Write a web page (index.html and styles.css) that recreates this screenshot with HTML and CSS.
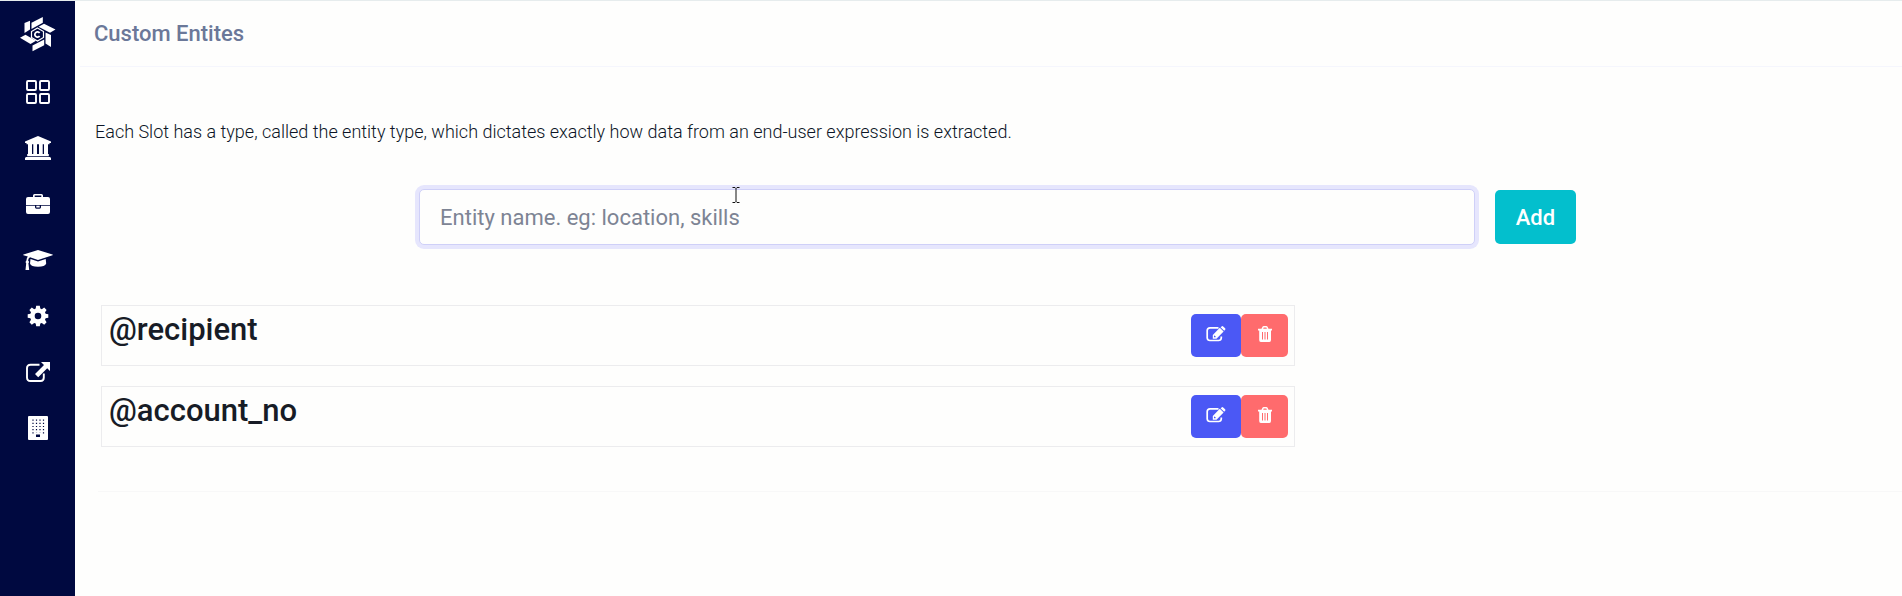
FILE: index.html
```html
<!DOCTYPE html>
<html lang="en">
<head>
<meta charset="utf-8">
<title>Custom Entites</title>
<link rel="stylesheet" href="styles.css">
</head>
<body>
<svg class="symbols" aria-hidden="true">
  <symbol id="edit" viewBox="0 0 20 16"><path d="M12.500 1.800H4A2.800 2.800 0 0 0 1.200 4.500v7.500A2.800 2.800 0 0 0 4 14.500h8.500a2.800 2.800 0 0 0 2.800-2.500v-1.500" fill="none" stroke="currentColor" stroke-width="1.700"/><path fill="currentColor" fill-rule="evenodd" d="M13.800 1.800 17.600 5.600 10.500 12.700H6.800V8.900zM14.600 1.200 15.600.4q.8-.7 1.600 0l1.900 1.800q.7.800 0 1.600l-.9 1zM8 9.800v1.500h1.400l.5-.5-1.500-1.400z"/></symbol>
  <symbol id="trash" viewBox="0 0 14 16"><path fill="currentColor" fill-rule="evenodd" d="M0 2.800H3.500L4.300 1.100Q4.800 0 5.900 0h2.300q1.100 0 1.500 1.100l.8 1.700H14v1.700h-1V14q0 2-1.600 2H2.800q-1.600 0-1.600-2V4.500H0zM5.200 2.800h3.700l-.6-1.300H5.700zM4 6v7.500h1V6zm2.500 0v7.500h1V6zM9 6v7.500h1V6z"/></symbol>
</svg>
<div class="app">
  <nav class="sidebar" aria-label="Main">
    <a class="logo" href="#" aria-label="Home"><svg width="36" height="36" viewBox="0 0 36 36"><g fill="#fff"><path d="M4.500 6 10 3.800V12.500L4.500 16z"/><path d="M11.500 5.800 22.800 0v5.800L11.500 12z"/><path d="M18.500 9.800 24 6.800 35.500 12.500 30 15.800z"/><path d="M25.500 15.500 31 18V30L25.500 26.500z"/><path d="M12.500 28.500 24.200 22.500V28.300l-11.700 6z"/><path d="M0 20.800 5.500 17.800 16 23.800 10.500 27z"/></g><path d="M17.500 11 23.500 14.500v6L17.500 24l-6-3.500v-6z" fill="#000940" stroke="#fff" stroke-width="1.200"/><path d="M19.600 16A2.600 2.600 0 1 0 19.600 19" fill="none" stroke="#fff" stroke-width="1.800"/></svg></a>
    <a href="#" aria-label="Dashboard"><svg width="24" height="24" viewBox="0 0 24 24"><g fill="none" stroke="#fff" stroke-width="1.900"><rect x="1" y="1" width="9" height="9" rx="1"/><rect x="14" y="1" width="9" height="9" rx="1"/><rect x="1" y="14" width="9" height="9" rx="1"/><rect x="14" y="14" width="9" height="9" rx="1"/></g></svg></a>
    <a href="#" aria-label="Institution"><svg width="26" height="24" viewBox="0 0 26 24"><path fill="#fff" d="M13 0 26 5.500V7h-1.500v1.200h-23V7H0V5.500zM3 8.200H7V18h1.300V8.200H12V18h2V8.200h3.700V18H19V8.200h4V18h.8v2.200H2.200V18H3zM0 24v-2l1-1h24l1 1v2z"/></svg></a>
    <a href="#" aria-label="Workspace"><svg width="24" height="20" viewBox="0 0 24 20"><path fill="#fff" fill-rule="evenodd" d="M7 3V1.500Q7 0 8.500 0h7Q17 0 17 1.500V3h5q2 0 2 2v6H0V5q0-2 2-2zM8.700 3h6.600V1.600H8.700zM0 11.700h9v1.600q0 1.400 1.400 1.400h3.200q1.400 0 1.400-1.400v-1.600h9V18q0 2-2 2H2q-2 0-2-2zM10.300 11.700h3.400v1.700h-3.400z"/></svg></a>
    <a href="#" aria-label="Training"><svg width="30" height="20" viewBox="0 0 30 20"><path fill="#fff" d="M15 0 29.500 4.500q.8.300 0 .8L15 10 7 7.300q-1.700 1-1.900 3.200 1.600 1.200.3 2.700L6.200 20H2.500l.7-6.800q-1.200-1.500.2-2.700.2-2.400 1.400-3.900L.5 5.300q-.8-.5 0-.8zM7.500 9l7.500 2.500L22.700 9l.5 4.500q-1.200 3.300-8.200 3.300T7 13.500z"/></svg></a>
    <a href="#" aria-label="Settings"><svg width="22" height="22" viewBox="0 0 22 22"><path fill="#fff" fill-rule="evenodd" d="M9.200.8h3.600l.5 2.800 1.500.6L17.200 2.500 19.600 5 18 7.300l.6 1.500 2.700.4v3.600l-2.700.5-.6 1.500 1.600 2.400-2.400 2.500-2.400-1.700-1.500.6-.5 2.700H9.200l-.5-2.700-1.500-.6-2.400 1.700-2.400-2.500L4 14.800l-.6-1.500-2.700-.5V9.200l2.700-.4L4 7.300 2.400 5l2.400-2.500 2.400 1.700 1.500-.6zM11 7.700a3.300 3.300 0 1 0 0 6.600 3.300 3.300 0 0 0 0-6.600z"/></svg></a>
    <a href="#" aria-label="Open site"><svg width="24" height="20" viewBox="0 0 24 20"><path d="M13.500 2.800H4.500Q1 2.800 1 6v9.500Q1 19 4.500 19h10q3.300 0 3.300-3.500V11.500" fill="none" stroke="#fff" stroke-width="1.900"/><path fill="#fff" d="M15 0H24v9L21.200 6.200l-9 9L9 12l9-9z"/></svg></a>
    <a href="#" aria-label="Company"><svg width="20" height="24" viewBox="0 0 20 24"><path fill="#fff" d="M1 0h18q1 0 1 1v22q0 1-1 1H1q-1 0-1-1V1q0-1 1-1z"/><path d="M5 3.500v15M8.500 3.500v13M12 3.500v13M15.500 3.500v15" stroke="#000940" stroke-width="1.200" stroke-dasharray="1.200 2"/><path d="M8 18.500h4V21H8z" fill="#000940"/></svg></a>
  </nav>
  <div class="page">
    <header class="topbar"><h1>Custom Entites</h1></header>
    <main>
      <p class="intro">Each Slot has a type, called the entity type, which dictates exactly how data from an end-user expression is extracted.</p>
      <form class="add-form">
        <div class="field">
          <input type="text" aria-label="Entity name" placeholder="Entity name. eg: location, skills">
          <svg class="pointer" width="8" height="16" viewBox="0 0 8 16" aria-hidden="true"><path d="M.500.500H3L4 1.500 5 .500H7.500M4 1.500v13M.500 15.500H3L4 14.500 5 15.500H7.500" fill="none" stroke="#111"/></svg>
        </div>
        <button type="button" class="add">Add</button>
      </form>
      <ul class="entities">
        <li><h2>@recipient</h2><div class="actions"><button type="button" class="edit" aria-label="Edit recipient"><svg width="20" height="16"><use href="#edit"/></svg></button><button type="button" class="delete" aria-label="Delete recipient"><svg width="14" height="16"><use href="#trash"/></svg></button></div></li>
        <li><h2>@account_no</h2><div class="actions"><button type="button" class="edit" aria-label="Edit account_no"><svg width="20" height="16"><use href="#edit"/></svg></button><button type="button" class="delete" aria-label="Delete account_no"><svg width="14" height="16"><use href="#trash"/></svg></button></div></li>
      </ul>
    </main>
  </div>
</div>
</body>
</html>
```
FILE: styles.css
```css
* { box-sizing: border-box; }
body { margin: 0; background: #fefefd; color: #1b2430; font-family: Roboto, sans-serif; }
h1, h2, p, ul { margin: 0; padding: 0; font-weight: 500; }
button, input { font: inherit; }
.symbols { position: absolute; width: 0; height: 0; }
.app { display: flex; min-height: 100vh; border-top: 1px solid #e6eced; }
.sidebar { width: 75px; flex-shrink: 0; background: #000940; display: flex; flex-direction: column; align-items: center; padding-top: 5px; }
.sidebar a { display: flex; align-items: center; justify-content: center; width: 100%; height: 56px; }
.sidebar .logo { height: 58px; }
.page { flex: 1; min-width: 0; padding-left: 5px; }
.topbar { height: 66px; padding: 18px 14px; border-bottom: 1px solid #f5f6fd; }
.topbar h1 { font-size: 22px; line-height: 30px; color: #6b7899; }
main { margin-left: 18px; padding-bottom: 44px; border-bottom: 1px solid #f8f8f8; }
.intro { margin-left: -3px; padding-top: 52px; font-size: 18px; line-height: 26px; font-weight: 350; color: #0c1526; }
.add-form { display: flex; align-items: center; gap: 20px; margin-top: 44px; padding-left: 17.8%; }
.field { position: relative; width: 71.2%; }
.field input { display: block; width: 100%; height: 56px; padding: 0 20px; border: 1px solid #cfd0f8; border-radius: 5px; box-shadow: 0 0 0 4px #e6e6fd; background: #fefefd; font-size: 22px; color: #1b2430; outline: 0; }
.field input::placeholder { color: #7d8494; opacity: 1; }
.pointer { position: absolute; left: 29.6%; top: -2px; }
.add { width: 81px; height: 54px; border: 0; border-radius: 5px; background: #03bfcd; color: #fff; font-size: 22px; font-weight: 500; }
.entities { list-style: none; width: 66.2%; margin: 60px 0 0 3px; display: grid; gap: 20px; }
.entities li { display: flex; justify-content: space-between; height: 61px; padding: 8px 6px 8px 7px; border: 1px solid #ececee; }
.entities h2 { font-size: 31px; line-height: 32px; color: #171c26; }
.actions { display: flex; height: 43px; }
.actions button { display: flex; align-items: center; justify-content: center; padding: 0 0 3px; border: 0; border-radius: 5px; color: #fff; }
.edit { width: 50px; background: #4b58f5; }
.delete { width: 47px; background: #ff6b6d; }
```
